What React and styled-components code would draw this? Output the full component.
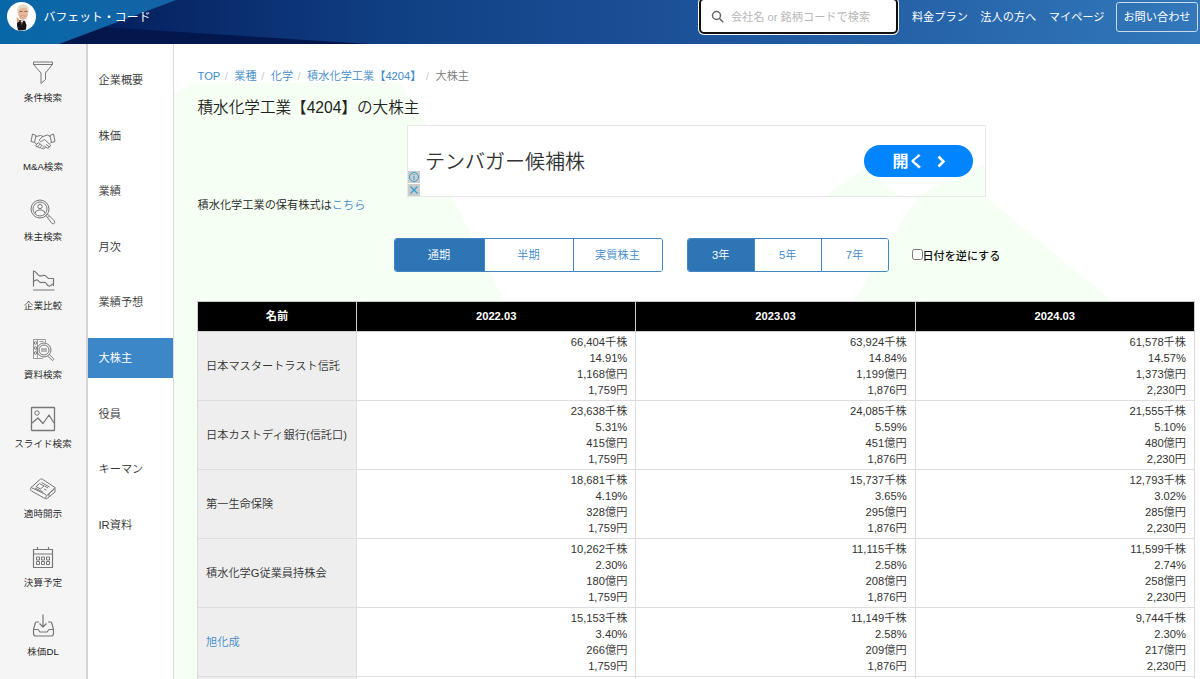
// src/App.jsx
import React from "react";
import styled, { createGlobalStyle } from "styled-components";

const GlobalStyle = createGlobalStyle`
  * {
    box-sizing: border-box;
  }

  body {
    margin: 0;
    overflow: hidden;
    background: #fff;
    color: #333;
    font-family: "Liberation Sans", "Noto Sans CJK JP", sans-serif;
    font-size: 11.2px;
    font-weight: 350;
    line-height: 16px;
  }

  a {
    color: #428bca;
    text-decoration: none;
  }
`;

const Page = styled.div`
  height: 679px;
  display: flex;
  flex-direction: column;
  overflow: hidden;
`;

const Header = styled.header`
  position: relative;
  flex: none;
  height: 44px;
  display: flex;
  justify-content: space-between;
  color: #fff;
  background: #1c4f96;
`;

const HeaderArt = styled.svg`
  position: absolute;
  inset: 0;
  width: 100%;
  height: 100%;
`;

const Brand = styled.div`
  position: relative;
  display: flex;
  align-items: center;
  gap: 7.5px;
  height: 33px;
  padding-left: 7px;
  font-size: 11.9px;
  font-weight: 400;
`;

const HeaderNav = styled.nav`
  position: relative;
  display: flex;
  align-items: flex-start;
  padding-right: 2px;
  font-weight: 400;
`;

const SearchBox = styled.label`
  display: flex;
  align-items: center;
  gap: 7px;
  width: 199px;
  height: 36px;
  margin: -2px 14px 0 0;
  padding: 1px 0 0 10px;
  border: 2px solid #101010;
  border-radius: 5px;
  background: #fff;
  box-shadow: 0 0 0 1px #fff;
`;

const SearchInput = styled.input`
  width: 165px;
  padding: 0;
  border: 0;
  outline: 0;
  background: none;
  font: inherit;
  font-size: 11.2px;

  &::placeholder {
    color: #b8b8b8;
    opacity: 1;
  }
`;

const NavItem = styled.span`
  margin: 9px 12.5px 0 0;
  white-space: nowrap;
`;

const ContactButton = styled.button`
  width: 82px;
  height: 30px;
  margin: 2px 0 0 -1px;
  padding: 0;
  border: 1px solid #c8daec;
  border-radius: 3px;
  background: transparent;
  color: #fff;
  font: inherit;
  white-space: nowrap;
`;

const Body = styled.div`
  flex: 1;
  display: flex;
  min-height: 0;
`;

const Sidebar = styled.aside`
  flex: none;
  width: 88px;
  padding-top: 11px;
  border-right: 2px solid #d4d4d4;
  background: #f5f5f5;
`;

const SideItem = styled.div`
  height: 69.3px;
  display: flex;
  flex-direction: column;
  align-items: center;
  gap: 1px;
  padding-top: 2px;
  color: #222;
  font-size: 9.6px;
  white-space: nowrap;

  svg {
    flex: none;
    width: 32px;
    height: 32px;
    fill: none;
    stroke: #777;
    stroke-width: 1;
    stroke-linejoin: round;
  }
`;

const Menu = styled.nav`
  flex: none;
  width: 86px;
  display: flex;
  flex-direction: column;
  gap: 15.6px;
  padding-top: 16px;
  border-right: 1px solid #ddd;
`;

const MenuItem = styled.div`
  flex: none;
  height: 40px;
  padding: 12px 10.5px;
  background: ${(props) => (props.$active ? "#3b87c8" : "transparent")};
  color: ${(props) => (props.$active ? "#fff" : "#333")};
  font-weight: ${(props) => (props.$active ? 400 : 350)};
`;

const Main = styled.main`
  position: relative;
  flex: 1;
  padding: 24px 5px 0 23.5px;
`;

const MainArt = styled.svg`
  position: absolute;
  left: 0;
  top: 0;
  width: 1026px;
  height: 635px;
`;

const Content = styled.div`
  position: relative;
`;

const Breadcrumb = styled.div`
  display: flex;
  height: 16px;
  color: #777;
`;

const Slash = styled.span`
  width: 14px;
  padding-left: 4.5px;
  color: #ccc;
`;

const Title = styled.h1`
  height: 22px;
  margin: 13px 0 6px;
  color: #222;
  font-size: 15.6px;
  font-weight: 350;
  line-height: 22px;
`;

const Ad = styled.div`
  width: 579px;
  height: 72px;
  display: flex;
  align-items: center;
  margin-left: 209.5px;
  padding-right: 12px;
  border: 1px solid #e8e8e8;
`;

const AdBadges = styled.div`
  align-self: flex-end;
  display: flex;
  flex-direction: column;
  gap: 1px;
  width: 12px;

  svg {
    width: 12px;
    height: 12px;
    background: #ccc;
    fill: none;
    stroke: #2f9fd6;
  }
`;

const AdText = styled.div`
  flex: 1;
  padding: 2px 0 0 5px;
  color: #333;
  font-size: 20px;
  line-height: 30px;
`;

const AdButton = styled.div`
  width: 109px;
  height: 32px;
  display: flex;
  align-items: center;
  gap: 12px;
  padding: 1px 0 0 28.5px;
  border-radius: 16px;
  background: #0084ff;
  color: #fff;
  font-size: 16px;
  font-weight: 700;
`;

const Holding = styled.p`
  height: 16px;
  margin: 0;
  color: #222;
`;

const Filters = styled.div`
  display: flex;
  align-items: center;
  gap: 24px;
  margin: 25px 0 29px 196px;
`;

const ButtonGroup = styled.div`
  display: flex;
  height: 34px;
  border: 1px solid #4187c3;
  border-radius: 3px;
  background: #fff;
  overflow: hidden;
`;

const GroupButton = styled.button`
  width: ${(props) => props.$width}px;
  padding: 0;
  border: 0;
  background: ${(props) => (props.$active ? "#2e75b5" : "#fff")};
  color: ${(props) => (props.$active ? "#fff" : "#428bca")};
  font: inherit;

  & + & {
    border-left: 1px solid #4187c3;
  }
`;

const ReverseLabel = styled.label`
  display: flex;
  align-items: center;
  margin-left: -1px;
  padding-top: 1px;
  color: #111;
  font-size: 11.1px;
  font-weight: 500;

  input {
    width: 11px;
    height: 11px;
    margin: -2px 0 0;
  }
`;

const Table = styled.table`
  width: 998px;
  margin-left: -0.5px;
  table-layout: fixed;
  border-collapse: collapse;
  font-size: 11.2px;
  background: #fff;
`;

const HeadCell = styled.th`
  width: ${(props) => props.$width};
  height: 30px;
  padding: 0 0 1px;
  border: 1px solid #ccc;
  background: #000;
  color: #fff;
  font-weight: 700;
`;

const NameCell = styled.td`
  height: 69.1px;
  padding: 0 8px;
  border: 1px solid #ddd;
  background: #eee;
  white-space: nowrap;
`;

const ValueCell = styled.td`
  padding: 0 8px 0 0;
  border: 1px solid #ddd;
  text-align: right;

  div {
    height: 16px;
  }
`;

const sideItems = [
  {
    label: "条件検索",
    icon: (
      <>
        <path d="M6.500 5h19v2.500l-7 8.500v6.500L14 26.500V16L6.500 7.500z" />
        <path d="M6.500 7.500h19" />
      </>
    ),
  },
  {
    label: "M&A検索",
    icon: (
      <>
        <path d="M5.500 8 9 9.500 7.500 16.500 4 15.500zM26.500 8 23 9.500l1.500 7 3.500-1z" />
        <path d="M9 10.500 13.500 9.500l2.500 1 4.500-1.500 2.500 1.500M16 10.500l-3.500 3c-.5 2 1.500 2.500 3 1.200l2-1.200 6 5.500c.5 1.200-.8 2-1.800 1.300l-2.700-2M7.500 16.500l2.500 2M24.500 16l-1.500 1.500M11 17l-2 2c-.8 1.500 1 2.500 2 1.500.2 1.200 1.200 1.800 2.200.8.3 1.200 1.300 1.500 2.300.7.500 1.500 2 1 2.300 0l.7-1M17.500 20l2.500 2c1.500.5 2.300-.5 1.800-2" />
        <path d="M11 17c1-.8 2.300.3 1.500 1.500l-1.500 2M13 18.500c1-.5 2 .5 1.500 1.500l-1.300 1.300M15.500 19.800c1 0 1.500.7 1 1.500" />
      </>
    ),
  },
  {
    label: "株主検索",
    icon: (
      <>
        <circle cx="13" cy="13" r="9" />
        <circle cx="13" cy="13" r="7" />
        <circle cx="13" cy="10.500" r="2.200" />
        <path d="M8.500 17v-1.500L11.500 14h3l3 1.500V17M19 19.500l1.500-1.500 7 7c1 2-1 3.500-2.500 2.500zM21 21.500l1.500-1.500" />
      </>
    ),
  },
  {
    label: "企業比較",
    icon: (
      <path
        d="M6.500 21.500V6c2.500 0 3 3 5.500 4.500s4-1 6 0 2 2.500 4 3h4.500V21M6.500 16.500c2.500-2 4-2.500 5.500 0s4 0 6 1 2 3 4 3.500 3-2.500 4.500-2M6 25h21.500"
        strokeWidth="1.200"
      />
    ),
  },
  {
    label: "資料検索",
    icon: (
      <>
        <path d="M16 24.500H6.500v-19h12v3M10.500 5.500v19M12.500 7.500h4" opacity="0.7" />
        <circle cx="8.500" cy="9" r="1.300" />
        <circle cx="8.500" cy="14" r="1.300" />
        <circle cx="8.500" cy="19" r="1.300" />
        <circle cx="17" cy="16" r="7" />
        <circle cx="17" cy="16" r="5" />
        <path d="M14 15h6M14 17h6M20.500 22l5 4.500c1-.2 1.500-1 1-1.800l-4.500-4.700" />
      </>
    ),
  },
  {
    label: "スライド検索",
    icon: (
      <>
        <rect x="4.500" y="4.500" width="23" height="23" rx="0.500" strokeWidth="1.300" />
        <circle cx="10" cy="10" r="2.200" />
        <path d="M5 20l6-5 5 5.500 6-8.500 5 8" strokeWidth="1.300" />
      </>
    ),
  },
  {
    label: "適時開示",
    icon: (
      <>
        <path d="M4 14.500 13 6.500c.8-.7 1.500-.7 2.300-.3L28 14.500l-8 8M4 14.500c-1 1.200-.8 2.500.5 3.500L18 25.500c1 .5 1.800.3 2.500-.3L28 19v-4.500M4 14.500 18 21c1.500.8 1.800 2.500.5 4M20.500 22l7-6M22 23.500v-2.500" />
        <path d="M9 13.500l3.500-3 4.500 2.500-3.500 3zM14.500 9.500l8 4.500M17.500 13l3.500 2M8 15l8 4M17 16l2.500 1.200" />
      </>
    ),
  },
  {
    label: "決算予定",
    icon: (
      <>
        <path d="M6.500 7.500h19v18h-19zM6.500 12h19M10.500 5v2.500M21.500 5v2.500" strokeWidth="1.200" />
        <path d="M9.500 15h3v3h-3zM14.500 15h3v3h-3zM19.500 15h3v3h-3zM9.500 19.500h3v3h-3zM14.500 19.500h3v3h-3zM19.500 19.500h3v3h-3z" />
      </>
    ),
  },
  {
    label: "株価DL",
    icon: (
      <>
        <path d="M16 3.500v12.500M12.500 12.500l3.500 3.500 3.500-3.500" strokeWidth="1.200" />
        <path d="M12 11H9.500c-.7 0-1 .4-1.200 1L6.500 18.500v4c0 1.500 1 2.500 2.500 2.500h15c1.500 0 2.500-1 2.500-2.500v-4L24.700 12c-.2-.6-.5-1-1.200-1H21M6.500 18.500h4.500l2 2.500h7l2-2.500h4.500" strokeWidth="1.200" />
      </>
    ),
  },
];

const menuItems = ["企業概要", "株価", "業績", "月次", "業績予想", "大株主", "役員", "キーマン", "IR資料"];

const crumbs = ["TOP", "業種", "化学", "積水化学工業【4204】"];

const periods = ["2022.03", "2023.03", "2024.03"];

const holders = [
  {
    name: "日本マスタートラスト信託",
    values: [
      ["66,404千株", "14.91%", "1,168億円", "1,759円"],
      ["63,924千株", "14.84%", "1,199億円", "1,876円"],
      ["61,578千株", "14.57%", "1,373億円", "2,230円"],
    ],
  },
  {
    name: "日本カストディ銀行(信託口)",
    values: [
      ["23,638千株", "5.31%", "415億円", "1,759円"],
      ["24,085千株", "5.59%", "451億円", "1,876円"],
      ["21,555千株", "5.10%", "480億円", "2,230円"],
    ],
  },
  {
    name: "第一生命保険",
    values: [
      ["18,681千株", "4.19%", "328億円", "1,759円"],
      ["15,737千株", "3.65%", "295億円", "1,876円"],
      ["12,793千株", "3.02%", "285億円", "2,230円"],
    ],
  },
  {
    name: "積水化学G従業員持株会",
    values: [
      ["10,262千株", "2.30%", "180億円", "1,759円"],
      ["11,115千株", "2.58%", "208億円", "1,876円"],
      ["11,599千株", "2.74%", "258億円", "2,230円"],
    ],
  },
  {
    name: "旭化成",
    link: true,
    values: [
      ["15,153千株", "3.40%", "266億円", "1,759円"],
      ["11,149千株", "2.58%", "209億円", "1,876円"],
      ["9,744千株", "2.30%", "217億円", "2,230円"],
    ],
  },
];

const Avatar = () => (
  <svg width="29" height="29" viewBox="0 0 29 29">
    <circle cx="14.500" cy="14.500" r="14.500" fill="#fff" />
    <path d="M10 19l3-1 5 1 1.500 4-.5 4.500a14 14 0 0 1-8 .8l-1-5z" fill="#15171c" />
    <path d="M13.500 18.500l1.200 4 1.500-4z" fill="#fff" />
    <path d="M14.700 19.500l-.5 1 .6 4 .7-4z" fill="#8c3030" />
    <path d="M9.500 15l2 1.500 1 3-2.500 1.500z" fill="#dfa27e" />
    <ellipse cx="16" cy="11" rx="5" ry="7" fill="#e8b898" />
    <path d="M10.500 11C9.500 5.500 12.500 2 16.500 2.500c4 0 6 4 5 8.500-1-2-1-4.500-3-5-3-.7-5 .5-6 1.500z" fill="#e5d9c7" />
    <path d="M12.500 9.500h3M17.500 9.500h3" stroke="#66544a" strokeWidth="0.800" />
    <path d="M13.500 14c1.500 1.500 3.500 1.500 5 0z" fill="#fff" stroke="#b36f58" strokeWidth="0.500" />
  </svg>
);

const TopHeader = () => (
  <Header>
    <HeaderArt viewBox="0 0 1200 44" preserveAspectRatio="none">
      <defs>
        <linearGradient id="sky">
          <stop offset="0" stopColor="#0867a8" />
          <stop offset="1" stopColor="#1464a6" />
        </linearGradient>
        <linearGradient id="sea" gradientUnits="userSpaceOnUse" x1="100" y1="0" x2="1200" y2="0">
          <stop offset="0" stopColor="#051f5e" />
          <stop offset="0.270" stopColor="#104084" />
          <stop offset="0.550" stopColor="#1d539a" />
          <stop offset="1" stopColor="#3278bb" />
        </linearGradient>
      </defs>
      <rect width="1200" height="44" fill="url(#sea)" />
      <path d="M100 27 370 44H60z" fill="#03174d" />
      <path d="M0 0h176L59 44H0z" fill="url(#sky)" />
    </HeaderArt>
    <Brand>
      <Avatar />
      バフェット・コード
    </Brand>
    <HeaderNav>
      <SearchBox>
        <svg width="13" height="13" viewBox="0 0 13 13" fill="none" stroke="#666" strokeWidth="1.500">
          <circle cx="5.500" cy="5.500" r="4" />
          <path d="M8.500 8.500l3.700 3.700" />
        </svg>
        <SearchInput placeholder="会社名 or 銘柄コードで検索" />
      </SearchBox>
      <NavItem>料金プラン</NavItem>
      <NavItem>法人の方へ</NavItem>
      <NavItem>マイページ</NavItem>
      <ContactButton>お問い合わせ</ContactButton>
    </HeaderNav>
  </Header>
);

const HolderTable = () => (
  <Table>
    <thead>
      <tr>
        <HeadCell $width="159px">名前</HeadCell>
        {periods.map((period) => (
          <HeadCell key={period}>{period}</HeadCell>
        ))}
      </tr>
    </thead>
    <tbody>
      {holders.map((holder) => (
        <tr key={holder.name}>
          <NameCell>{holder.link ? <a href="#holder">{holder.name}</a> : holder.name}</NameCell>
          {holder.values.map((lines, i) => (
            <ValueCell key={periods[i]}>
              {lines.map((line) => (
                <div key={line}>{line}</div>
              ))}
            </ValueCell>
          ))}
        </tr>
      ))}
      <tr>
        <NameCell />
        <ValueCell />
        <ValueCell />
        <ValueCell />
      </tr>
    </tbody>
  </Table>
);

const App = () => {
  return (
    <Page>
      <GlobalStyle />
      <TopHeader />
      <Body>
        <Sidebar>
          {sideItems.map((item) => (
            <SideItem key={item.label}>
              <svg viewBox="0 0 32 32">{item.icon}</svg>
              {item.label}
            </SideItem>
          ))}
        </Sidebar>
        <Menu>
          {menuItems.map((item) => (
            <MenuItem key={item} $active={item === "大株主"}>
              {item}
            </MenuItem>
          ))}
        </Menu>
        <Main>
          <MainArt viewBox="0 0 1026 635" fill="#f6fff3">
            <path d="M0 50 18 39H226L253 81H233V153H278L331 258V635H0z" />
            <path d="M652 152 690 124 725 152z" />
            <path d="M744 152 790 128 811 120V152L939 258H679z" />
          </MainArt>
          <Content>
            <Breadcrumb>
              {crumbs.map((crumb) => (
                <React.Fragment key={crumb}>
                  <a href="#crumb">{crumb}</a>
                  <Slash>/</Slash>
                </React.Fragment>
              ))}
              <span>大株主</span>
            </Breadcrumb>
            <Title>積水化学工業【4204】の大株主</Title>
            <Ad>
              <AdBadges>
                <svg viewBox="0 0 12 12">
                  <circle cx="6" cy="6" r="4.500" />
                  <path d="M6 5v4M6 3v1" />
                </svg>
                <svg viewBox="0 0 12 12">
                  <path d="M2.500 2.500l7 7M9.500 2.500l-7 7" strokeWidth="1.300" />
                </svg>
              </AdBadges>
              <AdText>テンバガー候補株</AdText>
              <AdButton>
                開く
                <svg width="9" height="13" viewBox="0 0 9 13" fill="none" stroke="#fff" strokeWidth="2.500">
                  <path d="M1.500 1.500l5 5-5 5" />
                </svg>
              </AdButton>
            </Ad>
            <Holding>
              積水化学工業の保有株式は<a href="#holding">こちら</a>
            </Holding>
            <Filters>
              <ButtonGroup>
                <GroupButton $width={89} $active>通期</GroupButton>
                <GroupButton $width={89}>半期</GroupButton>
                <GroupButton $width={89}>実質株主</GroupButton>
              </ButtonGroup>
              <ButtonGroup>
                <GroupButton $width={66.5} $active>3年</GroupButton>
                <GroupButton $width={66.5}>5年</GroupButton>
                <GroupButton $width={67}>7年</GroupButton>
              </ButtonGroup>
              <ReverseLabel>
                <input type="checkbox" />
                日付を逆にする
              </ReverseLabel>
            </Filters>
            <HolderTable />
          </Content>
        </Main>
      </Body>
    </Page>
  );
};

export default App;
